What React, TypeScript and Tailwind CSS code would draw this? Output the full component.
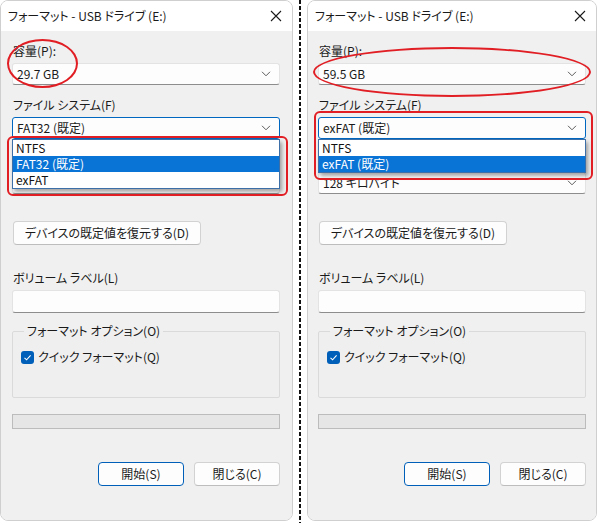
import React from "react";

const FONT = "font-['Noto_Sans_CJK_JP',sans-serif] [font-feature-settings:'palt']";

function Chevron() {
  return (
    <svg width="10" height="6" viewBox="0 0 10 6" className="shrink-0">
      <path d="M1 0.8 L5 4.8 L9 0.8" fill="none" stroke="#5c5c5c" strokeWidth="1" />
    </svg>
  );
}

function Combo({ text, focused = false }: { text: string; focused?: boolean }) {
  return (
    <div
      className={`h-[22px] flex items-center justify-between pl-[4px] pr-[8px] rounded-[3px] border bg-[#fdfdfd] text-[12px] leading-[16px] text-[#1a1a1a] ${
        focused ? "border-[#0067c0] border-b-[#0067c0]" : "border-[#e3e3e3] border-b-[#8d8d8d]"
      }`}
    >
      <span>{text}</span>
      <Chevron />
    </div>
  );
}

function Label({ children, hidden = false }: { children: React.ReactNode; hidden?: boolean }) {
  return (
    <div className={`pl-[1px] text-[12px] leading-[16px] text-[#1a1a1a] ${hidden ? "invisible" : ""}`}>{children}</div>
  );
}

function Button({ children, primary = false, className = "" }: { children: React.ReactNode; primary?: boolean; className?: string }) {
  return (
    <div
      className={`h-[24px] flex items-center justify-center rounded-[4px] border bg-[#fdfdfd] text-[12px] text-[#1a1a1a] ${
        primary ? "border-[#005fb8]" : "border-[#d2d2d2] border-b-[#bdbdbd]"
      } ${className}`}
    >
      {children}
    </div>
  );
}

type Opt = { text: string; selected?: boolean };

function FormatWindow({
  capacity,
  fs,
  options,
  alloc,
  side,
}: {
  capacity: string;
  fs: string;
  options: Opt[];
  alloc: string;
  side: "left" | "right";
}) {
  const isLeft = side === "left";
  return (
    <div
      className={`relative flex flex-col h-[521px] rounded-lg border border-[#cfcfcf] overflow-hidden ${
        isLeft ? "w-[293px]" : "w-[290px]"
      }`}
    >
      {/* title bar */}
      <div className="h-[30px] shrink-0 bg-white flex items-center justify-between pl-[7px] pr-[10px]">
        <span className="text-[12px] text-[#1a1a1a]">フォーマット - USB ドライブ (E:)</span>
        <svg width="12" height="12" viewBox="0 0 12 12">
          <path d="M1 1 L11 11 M11 1 L1 11" stroke="#1a1a1a" strokeWidth="1.1" />
        </svg>
      </div>
      {/* body */}
      <div className={`flex-1 bg-[#f0f0f0] flex flex-col pt-[12px] ${isLeft ? "pl-[11px] pr-[12px]" : "pl-[10px] pr-[10px]"}`}>
        <Label>容量(P):</Label>
        <div className="mt-[4px]">
          <Combo text={capacity} />
        </div>
        <div className="mt-[12px]">
          <Label>ファイル システム(F)</Label>
        </div>
        <div className="mt-[4px] relative z-10">
          <Combo text={fs} focused />
          <div className="absolute left-0 right-0 top-[22px] bg-white border border-[#3c6ea8] shadow-[2px_3px_4px_rgba(0,0,0,0.35)]">
            {options.map((o) => (
              <div
                key={o.text}
                className={`h-[16px] pl-[3px] flex items-center text-[12px] ${
                  o.selected ? "bg-[#0a74d6] text-white" : "text-[#111]"
                }`}
              >
                {o.text}
              </div>
            ))}
          </div>
        </div>
        <div className="mt-[13px]">
          <Label hidden>アロケーション ユニット サイズ(A)</Label>
        </div>
        <div className="mt-[4px]">
          <Combo text={alloc} />
        </div>
        <Button className="mt-[27px] ml-[1px] w-[188px] h-[23px]">デバイスの既定値を復元する(D)</Button>
        <div className="mt-[25px]">
          <Label>ボリューム ラベル(L)</Label>
        </div>
        <div className="mt-[4px] h-[23px] rounded-[3px] border border-[#e3e3e3] border-b-[#8d8d8d] bg-[#fdfdfd]" />
        <fieldset className="mt-[10px] h-[75px] border border-[#dadada] rounded-[2px] px-[8px] bg-[#efefef]">
          <legend className="ml-[3px] px-[3px] text-[12px] leading-[16px] text-[#1a1a1a]">フォーマット オプション(O)</legend>
          <div className="mt-[10px] flex items-center gap-[4px]">
            <span className="w-[13px] h-[13px] rounded-[3px] bg-[#005fb8] flex items-center justify-center">
              <svg width="9" height="9" viewBox="0 0 9 9">
                <path d="M1.5 4.8 L3.6 6.8 L7.6 2.4" fill="none" stroke="white" strokeWidth="1.1" />
              </svg>
            </span>
            <span className="text-[12px] leading-[16px] text-[#1a1a1a]">クイック フォーマット(Q)</span>
          </div>
        </fieldset>
        <div className="mt-[16px] h-[15px] border border-[#bcbcbc] bg-[#e6e6e6]" />
        <div className="mt-[33px] flex justify-end gap-[10px]">
          <Button primary className="w-[86px]">開始(S)</Button>
          <Button className="w-[86px]">閉じる(C)</Button>
        </div>
      </div>

      {/* red annotations */}
      {isLeft ? (
        <>
          <div className="absolute left-[6px] top-[38px] w-[71px] h-[49px] rounded-[50%] border-2 border-[#e01e24]" />
          <div className="absolute left-[6px] top-[135px] w-[281px] h-[60px] rounded-[6px] border-2 border-[#e01e24] z-20" />
        </>
      ) : (
        <>
          <div className="absolute left-[5px] top-[46px] w-[278px] h-[50px] rounded-[50%] border-2 border-[#e01e24]" />
          <div className="absolute left-[6px] top-[110px] w-[279px] h-[69px] rounded-[6px] border-2 border-[#e01e24] z-20" />
        </>
      )}
    </div>
  );
}

export default function App() {
  return (
    <div className={`w-[600px] h-[523px] bg-white flex ${FONT}`}>
      <FormatWindow
        side="left"
        capacity="29.7 GB"
        fs="FAT32 (既定)"
        options={[{ text: "NTFS" }, { text: "FAT32 (既定)", selected: true }, { text: "exFAT" }]}
        alloc="4096 バイト"
      />
      <div className="w-[14px] flex justify-center">
        <div className="w-[2px] h-full bg-[repeating-linear-gradient(to_bottom,#111_0_4px,transparent_4px_6px)]" />
      </div>
      <FormatWindow
        side="right"
        capacity="59.5 GB"
        fs="exFAT (既定)"
        options={[{ text: "NTFS" }, { text: "exFAT (既定)", selected: true }]}
        alloc="128 キロバイト"
      />
    </div>
  );
}
